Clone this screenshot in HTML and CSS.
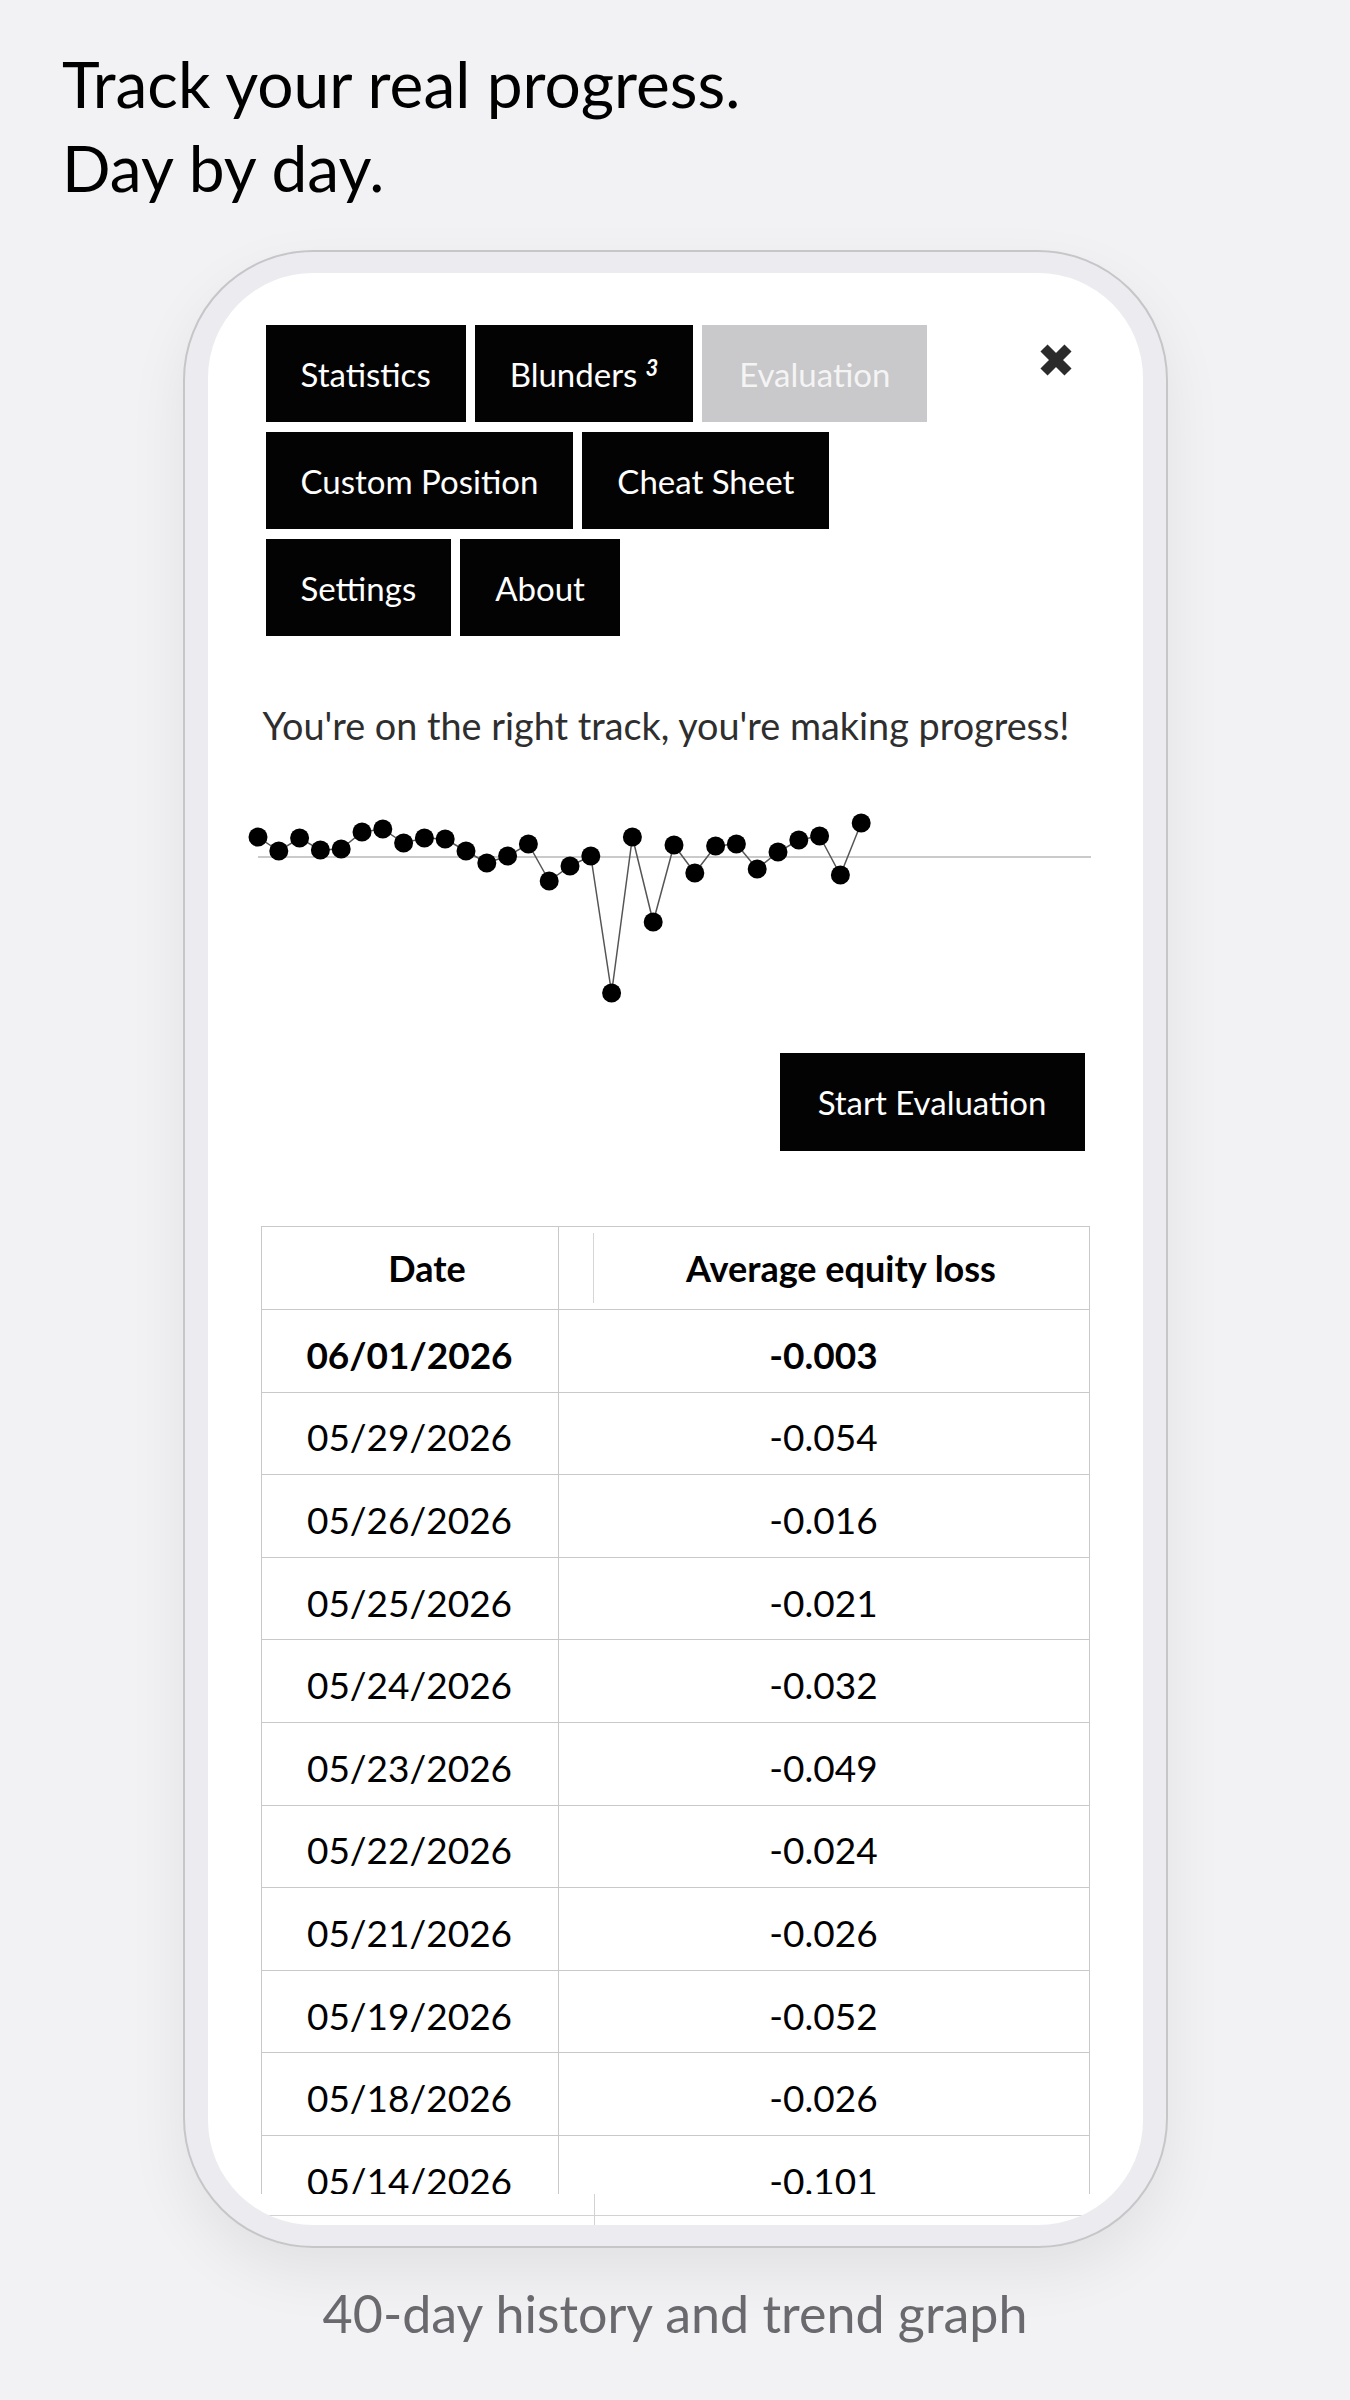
FILE: index.html
```html
<!DOCTYPE html>
<html lang="en">
<head>
    <meta charset="UTF-8">
    <meta name="viewport" content="width=device-width, initial-scale=1.0">
    <title>Evaluation</title>
    <link rel="stylesheet" href="styles.css">
</head>
<body>
    <h1 class="headline">Track your real progress.<br>Day by day.</h1>

    <div class="phone">
        <div class="screen">
            <div class="screen-body">
                <div class="topbar">
                    <nav class="tabs">
                        <button class="tab">Statistics</button>
                        <button class="tab">Blunders <sup>3</sup></button>
                        <button class="tab tab-active">Evaluation</button>
                        <button class="tab">Custom Position</button>
                        <button class="tab">Cheat Sheet</button>
                        <button class="tab">Settings</button>
                        <button class="tab">About</button>
                    </nav>
                    <button class="close" aria-label="Close">
                        <svg viewBox="0 0 34 34" width="34" height="34">
                            <path d="M5 5L29 29M29 5L5 29" stroke="#2b2b2b" stroke-width="10" fill="none"/>
                        </svg>
                    </button>
                </div>

                <p class="status">You're on the right track, you're making progress!</p>

                <!-- equity loss per day, zero line at y=87 -->
                <svg class="trend" viewBox="0 0 830 240" width="830" height="240">
                    <line x1="-3" y1="87" x2="830" y2="87" stroke="#cacaca" stroke-width="2"/>
                    <polyline fill="none" stroke="#555" stroke-width="1.5"
                        points="-3,67 17.8,81 38.6,68 59.4,80 80.2,79 101,62 121.8,59 142.6,73 163.4,68 184.2,69 205,81 225.8,93 246.6,86 267.4,74 288.2,111 309,96 329.8,86 350.6,223 371.4,67 392.2,152 413,75 433.8,103 454.6,76 475.4,74 496.2,99 517,82 537.8,70 558.6,66 579.4,105 600.2,53"/>
                    <g fill="#000">
                        <circle cx="-3" cy="67" r="9.5"/>
                        <circle cx="17.8" cy="81" r="9.5"/>
                        <circle cx="38.6" cy="68" r="9.5"/>
                        <circle cx="59.4" cy="80" r="9.5"/>
                        <circle cx="80.2" cy="79" r="9.5"/>
                        <circle cx="101" cy="62" r="9.5"/>
                        <circle cx="121.8" cy="59" r="9.5"/>
                        <circle cx="142.6" cy="73" r="9.5"/>
                        <circle cx="163.4" cy="68" r="9.5"/>
                        <circle cx="184.2" cy="69" r="9.5"/>
                        <circle cx="205" cy="81" r="9.5"/>
                        <circle cx="225.8" cy="93" r="9.5"/>
                        <circle cx="246.6" cy="86" r="9.5"/>
                        <circle cx="267.4" cy="74" r="9.5"/>
                        <circle cx="288.2" cy="111" r="9.5"/>
                        <circle cx="309" cy="96" r="9.5"/>
                        <circle cx="329.8" cy="86" r="9.5"/>
                        <circle cx="350.6" cy="223" r="9.5"/>
                        <circle cx="371.4" cy="67" r="9.5"/>
                        <circle cx="392.2" cy="152" r="9.5"/>
                        <circle cx="413" cy="75" r="9.5"/>
                        <circle cx="433.8" cy="103" r="9.5"/>
                        <circle cx="454.6" cy="76" r="9.5"/>
                        <circle cx="475.4" cy="74" r="9.5"/>
                        <circle cx="496.2" cy="99" r="9.5"/>
                        <circle cx="517" cy="82" r="9.5"/>
                        <circle cx="537.8" cy="70" r="9.5"/>
                        <circle cx="558.6" cy="66" r="9.5"/>
                        <circle cx="579.4" cy="105" r="9.5"/>
                        <circle cx="600.2" cy="53" r="9.5"/>
                    </g>
                </svg>

                <div class="actions">
                    <button class="btn">Start Evaluation</button>
                </div>

                <div class="history">
                    <div class="history-head">
                        <div class="head-date">Date</div>
                        <div class="head-loss">Average equity loss</div>
                    </div>
                    <div class="row row-today"><div class="cell">06/01/2026</div><div class="cell">-0.003</div></div>
                    <div class="row"><div class="cell">05/29/2026</div><div class="cell">-0.054</div></div>
                    <div class="row"><div class="cell">05/26/2026</div><div class="cell">-0.016</div></div>
                    <div class="row"><div class="cell">05/25/2026</div><div class="cell">-0.021</div></div>
                    <div class="row"><div class="cell">05/24/2026</div><div class="cell">-0.032</div></div>
                    <div class="row"><div class="cell">05/23/2026</div><div class="cell">-0.049</div></div>
                    <div class="row"><div class="cell">05/22/2026</div><div class="cell">-0.024</div></div>
                    <div class="row"><div class="cell">05/21/2026</div><div class="cell">-0.026</div></div>
                    <div class="row"><div class="cell">05/19/2026</div><div class="cell">-0.052</div></div>
                    <div class="row"><div class="cell">05/18/2026</div><div class="cell">-0.026</div></div>
                    <div class="row"><div class="cell">05/14/2026</div><div class="cell">-0.101</div></div>
                </div>
            </div>
            <div class="screen-foot"></div>
        </div>
    </div>

    <p class="caption">40-day history and trend graph</p>
</body>
</html>
```
FILE: styles.css
```css
* {
    box-sizing: border-box;
}

body {
    font-family: Lato, "Noto Sans", sans-serif;
    margin: 0;
    padding: 0;
    background-color: #f2f1f4;
    color: #000;
}

.headline {
    margin: 0;
    padding: 42px 62px 0;
    font-size: 64px;
    font-weight: 400;
    line-height: 84px;
}

/* device frame */
.phone {
    width: 985px;
    margin: 40px auto 0;
    padding: 21px 23px;
    background-color: #ecebef;
    border: 2px solid #c6c6c9;
    border-radius: 130px;
    box-shadow: 0 24px 60px rgba(0, 0, 0, 0.07);
}

.screen {
    height: 1952px;
    background-color: #fff;
    border-radius: 105px;
    overflow: hidden;
    display: flex;
    flex-direction: column;
}

.screen-body {
    height: 1921px;
    padding: 0 53px;
    overflow: hidden;
}

.screen-foot {
    height: 31px;
    background:
        linear-gradient(#d2d2d2, #d2d2d2) 53px 21px / 830px 1px no-repeat,
        linear-gradient(#d2d2d2, #d2d2d2) 386px 0 / 1px 31px no-repeat;
}

.topbar {
    display: flex;
    justify-content: space-between;
    align-items: flex-start;
    padding-top: 52px;
}

.tabs {
    display: flex;
    flex-wrap: wrap;
    gap: 10px 9px;
    width: 720px;
    margin-left: 5px;
}

button {
    font-family: inherit;
    border: none;
    border-radius: 0;
    cursor: pointer;
}

.tab,
.btn {
    height: 97px;
    padding: 0 35px;
    font-size: 33px;
    background-color: #030303;
    color: #fff;
    display: flex;
    align-items: center;
}

.tab sup {
    font-size: 22px;
    font-style: italic;
    font-weight: 700;
    margin-left: 8px;
    align-self: flex-start;
    margin-top: 32px;
    line-height: 1;
}

.tab-active {
    background-color: #c9c8cb;
    color: #f4f4f4;
    padding: 0 37px;
}

.close {
    background: none;
    padding: 0;
    margin: 18px 17px 0 0;
    line-height: 0;
}

.status {
    margin: 67px 0 0 2px;
    font-size: 37.8px;
    line-height: 46px;
    color: #2e2e2e;
}

.trend {
    display: block;
    margin-top: 21px;
    overflow: visible;
}

.actions {
    display: flex;
    justify-content: flex-end;
    margin-top: 43px;
    padding-right: 5px;
}

.btn {
    height: 98px;
    padding: 0 38px;
}

/* history table */
.history {
    margin-top: 75px;
    border: 1px solid #c9c9c9;
    border-bottom: none;
}

.history-head {
    display: grid;
    grid-template-columns: 332px 1fr;
    height: 83px;
    border-bottom: 1px solid #c9c9c9;
    background: linear-gradient(#c9c9c9, #c9c9c9) 296px 0 / 1px 100% no-repeat;
    font-size: 36px;
    font-weight: 700;
}

.head-date,
.head-loss {
    display: flex;
    align-items: center;
    justify-content: center;
}

.head-date {
    margin: 6px 0;
    border-right: 1px solid #d6d6d6;
}

.row {
    display: grid;
    grid-template-columns: 297px 1fr;
    height: 82.6px;
    border-bottom: 1px solid #c9c9c9;
    font-size: 37px;
}

.row-today {
    font-weight: 700;
}

.cell {
    display: flex;
    align-items: center;
    justify-content: center;
    padding-top: 7px;
}

.cell:first-child {
    border-right: 1px solid #c9c9c9;
}

.caption {
    margin: 34px 0 0;
    text-align: center;
    font-size: 52px;
    line-height: 62px;
    color: #6a6a6e;
}
```
